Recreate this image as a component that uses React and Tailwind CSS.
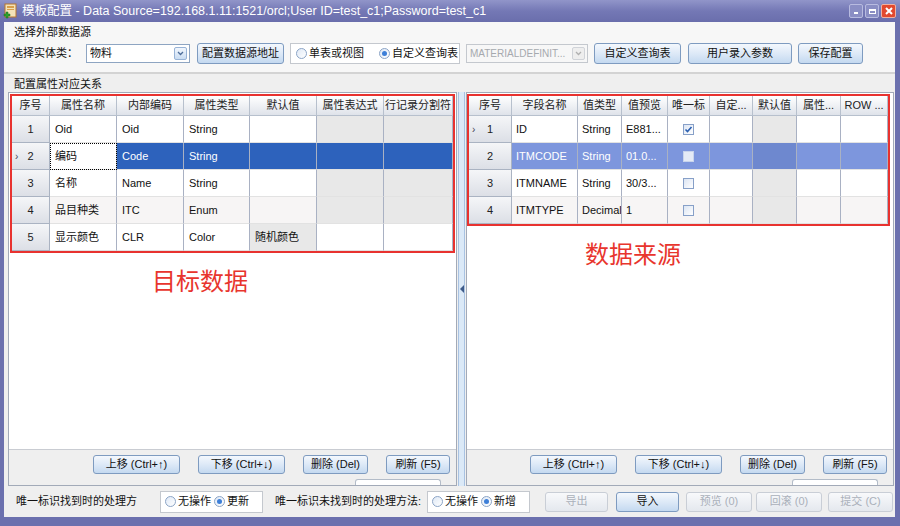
import React from 'react'

const leftHead = ['序号', '属性名称', '内部编码', '属性类型', '默认值', '属性表达式', '行记录分割符']
const leftW = ['w-[38px]', 'w-[67px]', 'w-[67px]', 'w-[66px]', 'w-[67px]', 'w-[67px]', 'w-[69px]']
const leftRows = [
  { n: '1', cells: ['Oid', 'Oid', 'String', '', '', ''], gray: [4, 5] },
  { n: '2', sel: true, mark: true, cells: ['编码', 'Code', 'String', '', '', ''], gray: [] },
  { n: '3', cells: ['名称', 'Name', 'String', '', '', ''], gray: [4, 5] },
  { n: '4', alt: true, cells: ['品目种类', 'ITC', 'Enum', '', '', ''], gray: [4, 5] },
  { n: '5', cells: ['显示颜色', 'CLR', 'Color', '随机颜色', '', ''], gray: [3] },
]

const rightHead = ['序号', '字段名称', '值类型', '值预览', '唯一标', '自定...', '默认值', '属性...', 'ROW ...']
const rightW = ['w-[43px]', 'w-[66px]', 'w-[44px]', 'w-[46px]', 'w-[42px]', 'w-[43px]', 'w-[44px]', 'w-[44px]', 'w-[47px]']
const rightRows = [
  { n: '1', mark: true, cells: ['ID', 'String', 'E881...', 'on', '', '', '', ''] },
  { n: '2', sel: true, cells: ['ITMCODE', 'String', '01.0...', 'off', '', '', '', ''] },
  { n: '3', cells: ['ITMNAME', 'String', '30/3...', 'off', '', '', '', ''] },
  { n: '4', alt: true, cells: ['ITMTYPE', 'Decimal', '1', 'off', '', '', '', ''] },
]

function Btn({ children, className = '', disabled = false }) {
  return (
    <div
      className={`flex items-center justify-center rounded-[3px] border text-[11px] whitespace-nowrap ${
        disabled
          ? 'border-[#c9ced6] bg-linear-to-b from-[#f8f9fb] to-[#e4e8ee] text-[#aab0ba]'
          : 'border-[#7e9bc0] bg-linear-to-b from-[#f4f8fd] via-[#dde9f7] to-[#c4d9f0] text-[#111]'
      } ${className}`}
    >
      {children}
    </div>
  )
}

function Radio({ checked }) {
  return (
    <span className="w-[11px] h-[11px] rounded-full border border-[#8ba4c6] bg-linear-to-br from-[#dfe9f6] to-white flex items-center justify-center shrink-0">
      {checked && <span className="w-[5px] h-[5px] rounded-full bg-[#3d7fd8]" />}
    </span>
  )
}

function Check({ on, sel }) {
  return (
    <span
      className={`w-[11px] h-[11px] border flex items-center justify-center ${
        sel ? 'border-[#c8d4ec] bg-[#e4eaf6]' : 'border-[#87a0c8] bg-linear-to-br from-[#dce5f3] to-white'
      }`}
    >
      {on && (
        <svg width="9" height="9" viewBox="0 0 9 9">
          <path d="M1.5 4.5 L3.5 6.5 L7.5 2" stroke="#2a5fb0" strokeWidth="1.6" fill="none" />
        </svg>
      )}
    </span>
  )
}

function Combo({ text, className = '', disabled = false }) {
  return (
    <div
      className={`h-[19px] flex items-center border ${
        disabled ? 'border-[#c4c8ce] text-[#a6a9ae] bg-[#f7f7f7]' : 'border-[#8ea5c2] text-[#111] bg-white'
      } ${className}`}
    >
      <span className={`flex-1 pl-[3px] overflow-hidden whitespace-nowrap ${disabled ? 'text-[10px]' : 'text-[11px]'}`}>{text}</span>
      <span
        className={`w-[13px] h-[13px] mr-[2px] shrink-0 rounded-[2px] border flex items-center justify-center ${
          disabled ? 'border-[#d0d3d8] bg-[#eeeeee]' : 'border-[#98b3d6] bg-linear-to-b from-[#f2f7fd] to-[#c9dcf2]'
        }`}
      >
        <svg width="7" height="5" viewBox="0 0 7 5">
          <path d="M1 1 L3.5 3.5 L6 1" stroke={disabled ? '#b0b0b0' : '#4d6d9a'} strokeWidth="1.3" fill="none" />
        </svg>
      </span>
    </div>
  )
}

function HeadCell({ w, children }) {
  return (
    <div className={`${w} h-[20px] shrink-0 flex items-center justify-center overflow-hidden whitespace-nowrap border-r border-b border-[#b7c0cd] bg-linear-to-b from-white to-[#dfe3ea] text-[11px] text-[#222]`}>
      {children}
    </div>
  )
}

function RowHead({ w, n, mark }) {
  return (
    <div className={`${w} h-[27px] shrink-0 relative flex items-center justify-center border-r border-b border-[#aab3c2] bg-linear-to-b from-[#f5f6f8] to-[#dcdfe6] text-[11px] text-[#222]`}>
      {mark && <span className="absolute left-[3px] text-[10px] text-[#445]">›</span>}
      {n}
    </div>
  )
}

function LeftTable() {
  return (
    <div className="border-2 border-[#e8322f] w-[445px]">
      <div className="flex">
        {leftHead.map((h, i) => (
          <HeadCell key={i} w={leftW[i]}>{h}</HeadCell>
        ))}
      </div>
      {leftRows.map((r) => (
        <div key={r.n} className="flex">
          <RowHead w={leftW[0]} n={r.n} mark={r.mark} />
          {r.cells.map((c, i) => {
            let bg = 'bg-white text-[#111]'
            if (r.sel) bg = i === 0 ? 'bg-white text-[#111] outline-1 outline-dotted outline-black -outline-offset-1' : 'bg-[#2d62bc] text-white'
            else if (r.gray.includes(i)) bg = 'bg-[#e8e8e8] text-[#111]'
            else if (r.alt) bg = 'bg-[#f7f5f5] text-[#111]'
            return (
              <div key={i} className={`${leftW[i + 1]} h-[27px] shrink-0 flex items-center pl-[5px] border-r border-b border-r-[#a9b1c3] border-b-[#e2e2e2] text-[11px] whitespace-nowrap ${bg}`}>
                {c}
              </div>
            )
          })}
        </div>
      ))}
    </div>
  )
}

function RightTable() {
  return (
    <div className="border-2 border-[#e8322f] w-[423px]">
      <div className="flex">
        {rightHead.map((h, i) => (
          <HeadCell key={i} w={rightW[i]}>{h}</HeadCell>
        ))}
      </div>
      {rightRows.map((r) => (
        <div key={r.n} className="flex">
          <RowHead w={rightW[0]} n={r.n} mark={r.mark} />
          {r.cells.map((c, i) => {
            let bg = 'bg-white text-[#111]'
            if (r.sel) bg = i === 5 ? 'bg-[#6e88cf] text-white' : 'bg-[#7d96dd] text-white'
            else if (i === 5) bg = 'bg-[#e8e8e8] text-[#111]'
            else if (r.alt) bg = 'bg-[#f7f5f5] text-[#111]'
            const isCheck = c === 'on' || c === 'off'
            return (
              <div key={i} className={`${rightW[i + 1]} h-[27px] shrink-0 flex items-center ${isCheck ? 'justify-center' : 'pl-[4px]'} border-r border-b border-r-[#a9b1c3] border-b-[#e2e2e2] text-[11px] whitespace-nowrap overflow-hidden ${bg}`}>
                {isCheck ? <Check on={c === 'on'} sel={r.sel} /> : c}
              </div>
            )
          })}
        </div>
      ))}
    </div>
  )
}

function PanelButtons() {
  return (
    <div className="h-[35px] flex flex-col items-end pr-[6px] pt-[5px]">
      <div className="flex gap-[18px]">
        <Btn className="w-[87px] h-[19px]">上移 (Ctrl+↑)</Btn>
        <Btn className="w-[87px] h-[19px]">下移 (Ctrl+↓)</Btn>
        <Btn className="w-[65px] h-[19px]">删除 (Del)</Btn>
        <Btn className="w-[64px] h-[19px]">刷新 (F5)</Btn>
      </div>
      <div className="mt-[5px] mr-[9px] w-[86px] h-[6px] border border-b-0 border-[#b3bcc8] rounded-t-[3px] bg-white" />
    </div>
  )
}

export default function App() {
  return (
    <div className="w-[900px] h-[526px] flex flex-col bg-[#6b70ae] font-['Liberation_Sans','Noto_Sans_CJK_SC',sans-serif] overflow-hidden select-none">
      {/* title bar */}
      <div className="h-[22px] flex items-center bg-linear-to-b from-[#9195c9] via-[#7478b5] to-[#6a6eac] text-white">
        <svg className="ml-[3px]" width="16" height="16" viewBox="0 0 16 16">
          <rect x="2" y="1" width="11" height="13" fill="#f3e3b8" stroke="#b8762e" />
          <rect x="4" y="3" width="7" height="2" fill="#d9a04c" />
          <rect x="4" y="6" width="7" height="1" fill="#d9a04c" />
          <path d="M3 9 h2 v2 h2 v2 h-2 v2 h-2 v-2 h-2 v-2 h2 z" fill="#2da12d" stroke="#1d6e1d" strokeWidth="0.5" />
        </svg>
        <span className="ml-[3px] text-[12.5px] whitespace-nowrap">
          模板配置 - Data Source=192.168.1.11:1521/orcl;User ID=test_c1;Password=test_c1
        </span>
        <div className="ml-auto mr-[4px] flex gap-[2px]">
          <div className="w-[14px] h-[14px] rounded-[2px] border border-[#b8bbe0] bg-[#8a8ec4] flex items-end justify-center pb-[3px]">
            <span className="w-[4px] h-[2px] bg-white" />
          </div>
          <div className="w-[14px] h-[14px] rounded-[2px] border border-[#b8bbe0] bg-[#8a8ec4] flex items-center justify-center">
            <span className="w-[7px] h-[5px] border border-white border-t-2" />
          </div>
          <div className="w-[15px] h-[14px] rounded-[2px] border border-[#f0b0a0] bg-[#e2492f] flex items-center justify-center">
            <svg width="8" height="8" viewBox="0 0 8 8">
              <path d="M1 1 L7 7 M7 1 L1 7" stroke="white" strokeWidth="2" />
            </svg>
          </div>
        </div>
      </div>

      {/* body */}
      <div className="flex-1 ml-[4px] mr-[5px] mb-[9px] bg-[#efefef] flex flex-col text-[#111]">
        <div className="h-[52px] bg-[#f7f7f7] border-b-2 border-[#d3d3d3] px-[8px]">
          <div className="h-[18px] pt-[2px] pl-[2px] text-[11px] leading-[16px]">选择外部数据源</div>
          <div className="mt-[2px] h-[22px] flex items-center">
            <span className="w-[74px] text-[11px]">选择实体类：</span>
            <Combo text="物料" className="w-[104px]" />
            <Btn className="ml-[7px] w-[87px] h-[21px]">配置数据源地址</Btn>
            <div className="ml-[6px] w-[170px] h-[21px] border border-[#c4c8ce] bg-white flex items-center pl-[5px] text-[11px] whitespace-nowrap overflow-hidden">
              <Radio />
              <span className="ml-[2px]">单表或视图</span>
              <span className="ml-[15px]"><Radio checked /></span>
              <span className="ml-[2px]">自定义查询表</span>
            </div>
            <Combo disabled text="MATERIALDEFINIT..." className="ml-[6px] w-[122px]" />
            <Btn className="ml-[6px] w-[87px] h-[21px]">自定义查询表</Btn>
            <Btn className="ml-[7px] w-[104px] h-[21px]">用户录入参数</Btn>
            <Btn className="ml-[6px] w-[65px] h-[21px]">保存配置</Btn>
          </div>
        </div>

        <div className="h-[18px] pl-[10px] pt-[2px] text-[11px] leading-[16px]">配置属性对应关系</div>

        <div className="h-[394px] flex pl-[4px]">
          {/* left panel */}
          <div className="w-[449px] border border-[#a2aab8] flex flex-col">
            <div className="h-[357px] bg-white border-b border-[#c9ccd2] pl-[1px] pt-[1px]">
              <LeftTable />
              <div className="mt-[15px] ml-[142px] text-[24px] leading-[28px] text-[#e8352d]">目标数据</div>
            </div>
            <PanelButtons />
          </div>

          {/* splitter */}
          <div className="w-[9px] flex items-center justify-center">
            <div className="w-[7px] h-full border-x border-[#a8c2e2] bg-[#dbe9f7] flex items-center justify-center">
              <span className="w-0 h-0 border-y-[4px] border-y-transparent border-r-[4px] border-r-[#3e5b8a]" />
            </div>
          </div>

          {/* right panel */}
          <div className="w-[428px] border border-[#a2aab8] flex flex-col">
            <div className="h-[357px] bg-white border-b border-[#c9ccd2] pt-[1px]">
              <RightTable />
              <div className="mt-[15px] ml-[118px] text-[24px] leading-[28px] text-[#e8352d]">数据来源</div>
            </div>
            <PanelButtons />
          </div>
        </div>

        {/* bottom row */}
        <div className="flex-1 flex items-center pl-[12px] text-[11px] whitespace-nowrap">
          <span className="w-[144px]">唯一标识找到时的处理方</span>
          <div className="w-[103px] h-[22px] border border-[#c4c8ce] bg-white flex items-center pl-[4px]">
            <Radio />
            <span className="ml-[2px]">无操作</span>
            <span className="ml-[3px]"><Radio checked /></span>
            <span className="ml-[2px]">更新</span>
          </div>
          <span className="ml-[12px] w-[152px]">唯一标识未找到时的处理方法:</span>
          <div className="w-[103px] h-[22px] border border-[#c4c8ce] bg-white flex items-center pl-[4px]">
            <Radio />
            <span className="ml-[2px]">无操作</span>
            <span className="ml-[3px]"><Radio checked /></span>
            <span className="ml-[2px]">新增</span>
          </div>
          <Btn disabled className="ml-[15px] w-[63px] h-[20px]">导出</Btn>
          <Btn className="ml-[8px] w-[63px] h-[20px]">导入</Btn>
          <Btn disabled className="ml-[7px] w-[66px] h-[20px]">预览 (0)</Btn>
          <Btn disabled className="ml-[4px] w-[66px] h-[20px]">回滚 (0)</Btn>
          <Btn disabled className="ml-[6px] w-[65px] h-[20px]">提交 (C)</Btn>
        </div>
      </div>
    </div>
  )
}
